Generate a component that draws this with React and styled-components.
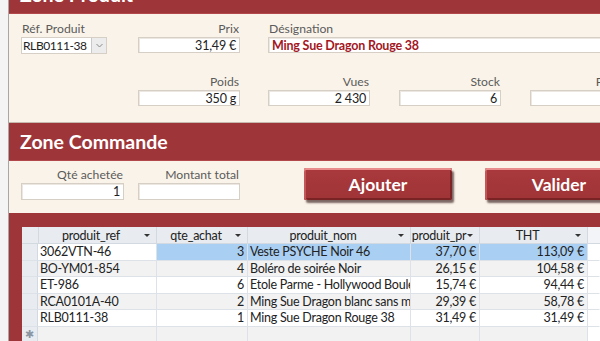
import styled, { createGlobalStyle } from 'styled-components'

const GlobalStyle = createGlobalStyle`
  html, body {
    margin: 0;
    padding: 0;
    background: #f3f3f3;
    overflow: hidden;
  }
  body {
    font-family: Lato, "Liberation Sans", sans-serif;
  }
`;

const Screen = styled.div`
  display: flex;
  width: 600px;
  height: 341px;
  overflow: hidden;
  background: #f3f3f3;
`;

const Gutter = styled.div`
  flex: none;
  width: 8px;
  border-right: 1px solid #a7a7a7;
  background: #f4f4f4;
`;

const Form = styled.div`
  flex: 1;
  min-width: 0;
  display: flex;
  flex-direction: column;
  margin-top: -25px;
  background: #faf3e9;
  overflow: hidden;
`;

const SectionHeader = styled.div`
  flex: none;
  box-sizing: border-box;
  height: 39px;
  display: flex;
  align-items: center;
  padding-left: 11px;
  background: #9e3539;
  border-top: 1px solid #c8b9ae;
  border-bottom: 1px solid #b2484b;
  color: #fff;
  font-weight: 700;
  font-size: 19.5px;
  white-space: nowrap;
`;

const ProduitBody = styled.div`
  flex: none;
  box-sizing: border-box;
  height: 108px;
  padding: 8px 0 0 12px;
  display: grid;
  grid-template-columns: 117px 130px 131px 131px 200px;
  grid-auto-rows: 31px;
  row-gap: 22px;
`;

const CommandeBody = styled.div`
  flex: none;
  box-sizing: border-box;
  height: 52px;
  padding: 7px 0 0 12px;
  display: flex;
  align-items: flex-start;
`;

const Field = styled.div`
  flex: none;
  display: flex;
  flex-direction: column;
  width: ${p => p.$w || 102}px;
  grid-column: ${p => p.$col} / span ${p => p.$span || 1};
  grid-row: ${p => p.$row || 1};
  margin-right: ${p => p.$mr || 0}px;
`;

const Label = styled.div`
  height: 14px;
  line-height: 14px;
  font-size: 12.2px;
  color: #5b5b5b;
  text-align: ${p => (p.$left ? 'left' : 'right')};
  padding: ${p => (p.$left ? '0 0 0 1px' : '0 1px 0 0')};
  white-space: nowrap;
  margin-bottom: 1px;
`;

const Input = styled.div`
  box-sizing: border-box;
  height: 17px;
  line-height: 15px;
  background: #fff;
  border: 1px solid #d6cfc6;
  box-shadow: inset 1px 1px 0 #ece7e1;
  padding: 0 3px;
  font-size: 12.5px;
  letter-spacing: -0.2px;
  color: ${p => (p.$accent ? '#a3171f' : '#222')};
  font-weight: ${p => (p.$accent ? 700 : 400)};
  text-align: ${p => (p.$left ? 'left' : 'right')};
  white-space: nowrap;
  overflow: hidden;
`;

const Combo = styled.div`
  box-sizing: border-box;
  display: flex;
  height: 17px;
  background: #fff;
  border: 1px solid #d6cfc6;
`;

const ComboText = styled.div`
  flex: 1;
  min-width: 0;
  line-height: 15px;
  padding-left: 1px;
  font-size: 12px;
  letter-spacing: -0.4px;
  color: #222;
  white-space: nowrap;
  overflow: hidden;
`;

const ComboButton = styled.div`
  flex: none;
  width: 14px;
  display: flex;
  align-items: center;
  justify-content: center;
  background: #ececec;
  border-left: 1px solid #c9c9c9;
`;

const Buttons = styled.div`
  flex: none;
  display: flex;
  gap: 33px;
  margin-left: 64px;
`;

const ActionButton = styled.button`
  flex: none;
  width: 148px;
  height: 32px;
  border: none;
  border-radius: 2px;
  background: linear-gradient(#a9393c, #9f3437);
  color: #fff;
  font-family: Lato, "Liberation Sans", sans-serif;
  font-weight: 700;
  font-size: 17.5px;
  box-shadow:
    inset 0 2px 0 #e98c8e,
    inset 2px 0 0 #c25658,
    inset -2px 0 0 #7d2426,
    inset 0 -2px 0 #7a2325,
    2px 3px 2px rgba(40, 10, 10, 0.6);
  cursor: pointer;
`;

const Subform = styled.div`
  flex: 1;
  background: #9e3539;
  padding: 14px 0 0 13px;
  overflow: hidden;
`;

const Sheet = styled.div`
  background: #fff;
  height: 100%;
  font-size: 12.5px;
  letter-spacing: -0.25px;
  color: #222;
`;

const COLS = '16px 119px 91px 163px 69px 108px 1fr';

const HeadRow = styled.div`
  display: grid;
  grid-template-columns: ${COLS};
  height: 16px;
  background: #e8ecf0;
  border-bottom: 1px solid #d3d9e0;
`;

const HeadCell = styled.div`
  position: relative;
  display: flex;
  align-items: center;
  justify-content: center;
  padding-right: 14px;
  padding-left: 2px;
  border-right: 1px solid ${p => (p.$filler ? 'transparent' : '#d3d9e0')};
  background: ${p => (p.$filler ? '#f2f4f7' : 'transparent')};
  white-space: nowrap;
  overflow: hidden;
  line-height: 15px;
`;

const Arrow = styled.span`
  position: absolute;
  right: 6px;
  top: 7px;
  border-left: 3px solid transparent;
  border-right: 3px solid transparent;
  border-top: 3px solid #333;
`;

const Row = styled.div`
  display: grid;
  grid-template-columns: ${COLS};
  height: 16.5px;
  background: ${p => (p.$alt ? '#f2f2f2' : '#fff')};
`;

const Selector = styled.div`
  background: #e8ecf0;
  border-right: 1px solid #d3d9e0;
  border-bottom: 1px solid #dde2e8;
  display: flex;
  align-items: center;
  justify-content: center;
  font-size: 11px;
  color: #8a96a3;
`;

const Cell = styled.div`
  box-sizing: border-box;
  padding: 0 ${p => (p.$num ? '3px' : '0')} 0 ${p => (p.$num ? '0' : '2px')};
  text-align: ${p => (p.$num ? 'right' : 'left')};
  line-height: 16px;
  white-space: nowrap;
  overflow: hidden;
  text-overflow: clip;
  border-right: 1px solid ${p => (p.$filler ? 'transparent' : '#dde2e8')};
  border-bottom: 1px solid #dde2e8;
  background: ${p => (p.$hl ? '#a9cff3' : p.$filler ? '#fff' : 'transparent')};
`;

const ROWS = [
  ['3062VTN-46', '3', 'Veste PSYCHE Noir 46', '37,70 €', '113,09 €'],
  ['BO-YM01-854', '4', 'Boléro de soirée Noir', '26,15 €', '104,58 €'],
  ['ET-986', '6', 'Etole Parme - Hollywood Boule', '15,74 €', '94,44 €'],
  ['RCA0101A-40', '2', 'Ming Sue Dragon blanc sans ma', '29,39 €', '58,78 €'],
  ['RLB0111-38', '1', 'Ming Sue Dragon Rouge 38', '31,49 €', '31,49 €'],
];

const HEADERS = ['produit_ref', 'qte_achat', 'produit_nom', 'produit_pr', 'THT'];

function Chevron() {
  return (
    <svg width="7" height="5" viewBox="0 0 7 5">
      <path d="M0.5 1 L3.5 4 L6.5 1" fill="none" stroke="#8a8a8a" strokeWidth="1" />
    </svg>
  );
}

export default function App() {
  return (
    <>
      <GlobalStyle />
      <Screen>
        <Gutter />
        <Form>
          <SectionHeader>Zone Produit</SectionHeader>
          <ProduitBody>
            <Field $col={1} $w={86}>
              <Label $left>Réf. Produit</Label>
              <Combo>
                <ComboText>RLB0111-38</ComboText>
                <ComboButton><Chevron /></ComboButton>
              </Combo>
            </Field>
            <Field $col={2}>
              <Label>Prix</Label>
              <Input>31,49 €</Input>
            </Field>
            <Field $col={3} $span={3} $w={400}>
              <Label $left>Désignation</Label>
              <Input $left $accent>Ming Sue Dragon Rouge 38</Input>
            </Field>
            <Field $col={2} $row={2}>
              <Label>Poids</Label>
              <Input>350 g</Input>
            </Field>
            <Field $col={3} $row={2}>
              <Label>Vues</Label>
              <Input>2 430</Input>
            </Field>
            <Field $col={4} $row={2}>
              <Label>Stock</Label>
              <Input>6</Input>
            </Field>
            <Field $col={5} $row={2}>
              <Label>Promo</Label>
              <Input></Input>
            </Field>
          </ProduitBody>

          <SectionHeader>Zone Commande</SectionHeader>
          <CommandeBody>
            <Field $w={103} $mr={14}>
              <Label>Qté achetée</Label>
              <Input>1</Input>
            </Field>
            <Field>
              <Label>Montant total</Label>
              <Input></Input>
            </Field>
            <Buttons>
              <ActionButton>Ajouter</ActionButton>
              <ActionButton>Valider</ActionButton>
            </Buttons>
          </CommandeBody>

          <Subform>
            <Sheet>
              <HeadRow>
                <HeadCell />
                {HEADERS.map(h => (
                  <HeadCell key={h}>
                    {h}
                    <Arrow />
                  </HeadCell>
                ))}
                <HeadCell $filler />
              </HeadRow>
              {ROWS.map((r, i) => (
                <Row key={r[0]} $alt={i % 2 === 1}>
                  <Selector />
                  <Cell>{r[0]}</Cell>
                  <Cell $num $hl={i === 0}>{r[1]}</Cell>
                  <Cell $hl={i === 0}>{r[2]}</Cell>
                  <Cell $num $hl={i === 0}>{r[3]}</Cell>
                  <Cell $num $hl={i === 0}>{r[4]}</Cell>
                  <Cell $filler />
                </Row>
              ))}
              <Row $alt>
                <Selector>✱</Selector>
                <Cell />
                <Cell />
                <Cell />
                <Cell />
                <Cell />
                <Cell $filler />
              </Row>
            </Sheet>
          </Subform>
        </Form>
      </Screen>
    </>
  );
}
